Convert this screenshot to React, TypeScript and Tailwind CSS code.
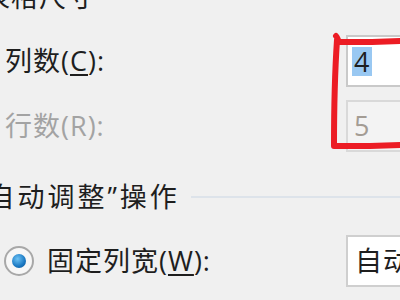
export default function App() {
  return (
    <div
      className="relative w-[400px] h-[300px] overflow-hidden bg-[#f0f0f0] text-[#1e1e1e] text-[27px] leading-[26px] tracking-[1px]"
      style={{ fontFamily: '"Open Sans", "Noto Sans CJK SC", sans-serif' }}
    >
      {/* group header, cut off at the top */}
      <div className="h-[26px] mt-[-16px] ml-[-17px] whitespace-nowrap">表格尺寸</div>

      {/* columns */}
      <div className="flex items-center h-[52px] mt-[25px]">
        <div className="w-[346px] shrink-0 pl-[5px] whitespace-nowrap">
          列数(<span className="underline underline-offset-[3px]">C</span>):
        </div>
        <div className="flex items-center h-full w-[80px] shrink-0 bg-white border-2 border-[#c9c9c9] pl-[4px]">
          <span className="bg-[#99c8f2] px-[2px] leading-[29px]">4</span>
        </div>
      </div>

      {/* rows (disabled) */}
      <div className="flex items-center h-[52px] mt-[13px] text-[#a3a3a3]">
        <div className="w-[346px] shrink-0 pl-[5px] whitespace-nowrap">行数(R):</div>
        <div className="flex items-center h-full w-[80px] shrink-0 bg-[#f3f3f3] border-2 border-[#d9d9d9] pl-[6px] text-[#a39c94]">
          5
        </div>
      </div>

      {/* autofit section */}
      <div className="flex items-center gap-[11px] h-[26px] mt-[32px] ml-[-25px]">
        <span className="whitespace-nowrap tracking-[3px]">“自动调整”操作</span>
        <div className="flex-1 h-[2px] bg-[#dde3ea]" />
      </div>

      <div className="flex items-center h-[52px] mt-[25px]">
        <div className="flex items-center w-[346px] shrink-0 pl-[4px] gap-[13px] whitespace-nowrap">
          <span className="flex items-center justify-center w-[30px] h-[30px] rounded-full border-2 border-[#a8a8a8] bg-[#f7f7f7]">
            <span className="w-[14px] h-[14px] rounded-full bg-[radial-gradient(circle_at_40%_35%,#6ec3f5,#1a78c2_60%,#0d4f8c)]" />
          </span>
          <span>
            固定列宽(<span className="underline underline-offset-[3px]">W</span>):
          </span>
        </div>
        <div className="flex items-center h-full w-[80px] shrink-0 bg-white border-2 border-[#cfcfcf] pl-[7px] whitespace-nowrap">
          自动
        </div>
      </div>

      {/* red marker annotation */}
      <svg className="absolute left-0 top-0 pointer-events-none" width="400" height="300">
        <path
          d="M336 36 C338 38 338 42 340 42 L372 42 L400 41 M337 40 C335 70 334 110 334 146 L370 146 L400 145"
          fill="none"
          stroke="#ec1c24"
          strokeWidth="6"
          strokeLinecap="round"
          strokeLinejoin="round"
        />
      </svg>
    </div>
  );
}
